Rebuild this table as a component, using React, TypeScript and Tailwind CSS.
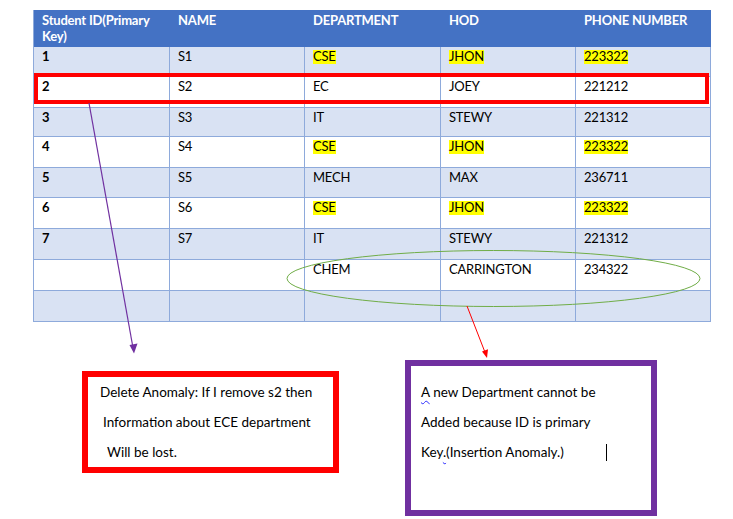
import React from "react";

const widths = [136, 135, 136, 135, 135];
const rowHeights = [30, 31, 29, 31, 30, 31, 31, 31, 31];

type Cell = { t: string; hl?: boolean; bold?: boolean };

const rows: Cell[][] = [
  [{ t: "1", bold: true }, { t: "S1" }, { t: "CSE", hl: true }, { t: "JHON", hl: true }, { t: "223322", hl: true }],
  [{ t: "2", bold: true }, { t: "S2" }, { t: "EC" }, { t: "JOEY" }, { t: "221212" }],
  [{ t: "3", bold: true }, { t: "S3" }, { t: "IT" }, { t: "STEWY" }, { t: "221312" }],
  [{ t: "4", bold: true }, { t: "S4" }, { t: "CSE", hl: true }, { t: "JHON", hl: true }, { t: "223322", hl: true }],
  [{ t: "5", bold: true }, { t: "S5" }, { t: "MECH" }, { t: "MAX" }, { t: "236711" }],
  [{ t: "6", bold: true }, { t: "S6" }, { t: "CSE", hl: true }, { t: "JHON", hl: true }, { t: "223322", hl: true }],
  [{ t: "7", bold: true }, { t: "S7" }, { t: "IT" }, { t: "STEWY" }, { t: "221312" }],
  [{ t: "" }, { t: "" }, { t: "CHEM" }, { t: "CARRINGTON" }, { t: "234322" }],
  [{ t: "" }, { t: "" }, { t: "" }, { t: "" }, { t: "" }],
];

const headers = ["Student ID(Primary Key)", "NAME", "DEPARTMENT", "HOD", "PHONE NUMBER"];

export default function App() {
  return (
    <div
      className="relative w-[733px] h-[519px] overflow-hidden bg-white text-black"
      style={{ fontFamily: "Lato, 'Open Sans', sans-serif" }}
    >
      <div className="pl-[33px] pt-[10px]">
        <div className="w-[678px] border-l border-[#8eaadb]">
          <div className="flex h-[37px] bg-[#4472c4] text-white font-bold text-[13px] tracking-[-0.2px] leading-[16px]">
            {headers.map((h, i) => (
              <div
                key={i}
                className="pl-2 pr-1 pt-[2px] border-r border-[#4472c4]"
                style={{ width: widths[i] }}
              >
                {h}
              </div>
            ))}
          </div>
          {rows.map((r, ri) => (
            <div
              key={ri}
              className={`flex border-b border-[#8eaadb] text-[13px] tracking-[-0.2px] leading-[18px] ${
                ri % 2 === 0 ? "bg-[#d9e2f3]" : "bg-white"
              }`}
              style={{ height: rowHeights[ri] }}
            >
              {r.map((c, ci) => (
                <div
                  key={ci}
                  className={`pl-2 border-r border-[#8eaadb] ${c.bold ? "font-bold" : ""}`}
                  style={{ width: widths[ci] }}
                >
                  {c.hl ? (
                    <span className="inline-block leading-[12px] pb-[2px] bg-[#ffff00]">{c.t}</span>
                  ) : (
                    c.t
                  )}
                </div>
              ))}
            </div>
          ))}
        </div>

        <div className="flex items-start mt-[38px]">
          <div className="ml-[49px] mt-[11px] w-[257px] h-[102px] border-[6px] border-[#ff0000] text-[13.5px] leading-[30px]">
            <div className="pl-[12px]">Delete Anomaly: If I remove s2 then</div>
            <div className="pl-[15px]">Information about ECE department</div>
            <div className="pl-[19px]">Will be lost.</div>
          </div>
          <div className="ml-[66px] w-[252px] h-[156px] border-[6px] border-[#7030a0] text-[13.5px] leading-[30px] pt-[11px] pl-[10px]">
            <div>
              <span className="underline decoration-wavy decoration-[#2b2bff] decoration-1 underline-offset-[3px]">A</span> new Department cannot be
            </div>
            <div>Added because ID is primary</div>
            <div className="flex items-center">
              <span>
                Key<span className="underline decoration-wavy decoration-[#2b2bff] decoration-1 underline-offset-[3px]">.</span>(Insertion Anomaly.)
              </span>
              <span className="inline-block ml-[42px] w-px h-[17px] bg-black" />
            </div>
          </div>
        </div>
      </div>

      <svg
        className="absolute left-0 top-0 pointer-events-none"
        width="733"
        height="519"
        viewBox="0 0 733 519"
      >
        <rect x="36" y="75" width="671" height="27" fill="none" stroke="#ff0000" strokeWidth="4" />
        <line x1="89" y1="103" x2="132.5" y2="345" stroke="#7030a0" strokeWidth="1.2" />
        <polygon points="134,353.5 129.5,345 137.5,343.6" fill="#7030a0" />
        <ellipse cx="493.5" cy="278.5" rx="206.5" ry="28" fill="none" stroke="#70ad47" strokeWidth="1" />
        <line x1="467" y1="306" x2="484.5" y2="351" stroke="#ff0000" strokeWidth="1" />
        <polygon points="487,358 482,351.5 488,349.3" fill="#ff0000" />
      </svg>
    </div>
  );
}
